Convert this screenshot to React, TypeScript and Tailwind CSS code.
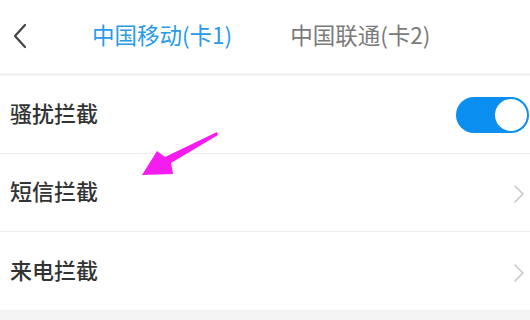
const font = { fontFamily: '"Noto Sans CJK SC", "Noto Sans", sans-serif' }

function Chevron() {
  return (
    <svg width="12" height="20" viewBox="0 0 12 20" className="mr-[5px] mt-[3px]">
      <path d="M2 2 L10 10 L2 18" fill="none" stroke="#c8c8c8" strokeWidth="1.6" strokeLinecap="round" strokeLinejoin="round" />
    </svg>
  )
}

function Row({ label, children, last }: { label: string; children: React.ReactNode; last?: boolean }) {
  return (
    <div className={`flex h-[78px] items-center justify-between pl-[10px] ${last ? '' : 'border-b border-[#ececec]'}`}>
      <span className="pb-[4px] text-[22px] font-medium text-[#333]">{label}</span>
      {children}
    </div>
  )
}

export default function App() {
  return (
    <div className="relative flex h-[320px] w-[530px] flex-col overflow-hidden bg-white" style={font}>
      {/* 顶部标签栏 */}
      <div className="flex h-[76px] shrink-0 items-center border-b-[3px] border-[#f2f2f2] pb-[4px]">
        <svg width="20" height="26" viewBox="0 0 20 26" className="ml-[10px] mt-[2px]">
          <path d="M15 2 L5 13 L15 24" fill="none" stroke="#444" strokeWidth="2.2" strokeLinecap="round" strokeLinejoin="round" />
        </svg>
        <span className="ml-[62px] text-[22.5px] text-[#2a9be6]">中国移动(卡1)</span>
        <span className="ml-[58px] text-[22.5px] text-[#7a7a7a]">中国联通(卡2)</span>
      </div>

      {/* 列表 */}
      <Row label="骚扰拦截">
        <div className="mr-[1px] flex h-[36px] w-[73px] items-center justify-end rounded-full bg-[#0a8ef0] pr-[2px]">
          <div className="h-[32px] w-[32px] rounded-full bg-white" />
        </div>
      </Row>
      <Row label="短信拦截">
        <Chevron />
      </Row>
      <Row label="来电拦截" last>
        <Chevron />
      </Row>
      <div className="flex-1 bg-[#f4f4f4]" />

      {/* 标注箭头 */}
      <svg className="pointer-events-none absolute left-0 top-0" width="530" height="320">
        <polygon points="142,175 157,151 165,157 217,132 218,135 171,163 173,174" fill="#f51cf0" />
      </svg>
    </div>
  )
}
